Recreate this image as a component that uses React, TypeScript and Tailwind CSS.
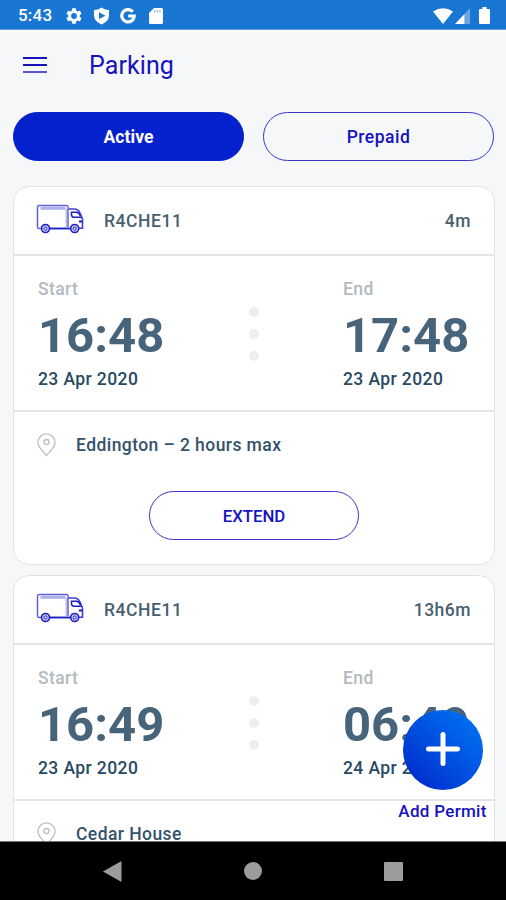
import { useState } from "react";

const permits = [
    { id: 1, plate: "R4CHE11", left: "4m", start: "16:48", startDate: "23 Apr 2020", end: "17:48", endDate: "23 Apr 2020", location: "Eddington – 2 hours max" },
    { id: 2, plate: "R4CHE11", left: "13h6m", start: "16:49", startDate: "23 Apr 2020", end: "06:49", endDate: "24 Apr 2020", location: "Cedar House" },
];

const Truck = () => (
    <svg className="-mt-[4px]" width="48" height="30" viewBox="0 0 48 30" fill="none" stroke="#1d1fc4">
        <path d="M5 24.500H3Q1.500 24.500 1.500 22.500V3Q1.500 1.500 3 1.500H30.500Q32 1.500 32 3V23" strokeWidth="1.500" opacity=".7" />
        <path d="M4.500 4.300H29.500" strokeWidth="3" opacity=".35" />
        <path d="M30.300 5V23" strokeWidth="1.500" opacity=".3" />
        <path d="M13 24.500H35" strokeWidth="1.900" />
        <path d="M32.500 5H39Q42.500 5.500 44 9L46.500 15V24.300H43" strokeWidth="1.600" opacity=".85" />
        <path d="M45.500 13.200H38Q35.500 13 35.500 10.500V8.300H40.500Q43 8.500 44.500 12" strokeWidth="1.500" />
        <path d="M43 17.500H46.500" strokeWidth="2" />
        <circle cx="9.500" cy="24.500" r="4" strokeWidth="1.600" fill="#d5d5f3" />
        <circle cx="9.500" cy="24.500" r="1.600" strokeWidth="1.200" opacity=".7" />
        <circle cx="38.700" cy="24.500" r="4" strokeWidth="1.600" fill="#d5d5f3" />
        <circle cx="38.700" cy="24.500" r="1.600" strokeWidth="1.200" opacity=".7" />
    </svg>
);

const Pin = () => (
    <svg width="20" height="24" viewBox="0 0 20 24" fill="none" stroke="#b9bfc3" strokeWidth="1.300">
        <path d="M10.500 22.600C8 19 1.900 14.500 1.900 9.500A8.600 8.600 0 0 1 19.100 9.500C19.100 14.500 13 19 10.500 22.600Z" />
        <circle cx="10.500" cy="9" r="2.500" />
    </svg>
);

const StatusBar = () => (
    <div className="flex h-[30px] shrink-0 items-center border-b border-[#5c9ade] bg-[#1976d2] pl-[18px] pr-[16px] pt-[2px] text-white">
        <span className="w-[48px] pt-px text-[17px] font-medium tracking-[0.2px]">5:43</span>
        <svg width="16" height="16" viewBox="2 2 20 20" fill="#fff">
            <path d="M19.140 12.940c.04-.3.060-.61.060-.94 0-.32-.02-.64-.07-.94l2.030-1.580c.18-.14.230-.41.120-.61l-1.920-3.320c-.12-.22-.37-.29-.59-.22l-2.390.960c-.5-.38-1.030-.7-1.620-.94l-.36-2.540c-.04-.24-.24-.41-.48-.41h-3.840c-.24 0-.43.170-.47.410l-.36 2.540c-.59.240-1.130.570-1.620.940l-2.390-.96c-.22-.08-.47 0-.59.220L2.740 8.870c-.12.210-.08.470.120.610l2.030 1.580c-.05.300-.09.630-.09.940s.02.640.070.940l-2.030 1.580c-.18.140-.23.410-.12.610l1.920 3.320c.12.220.370.290.590.220l2.390-.96c.5.380 1.030.7 1.620.940l.36 2.540c.05.240.240.410.480.410h3.840c.24 0 .44-.17.470-.41l.36-2.540c.59-.24 1.130-.56 1.620-.94l2.390.960c.22.080.470 0 .59-.22l1.920-3.320c.12-.22.070-.47-.12-.61l-2.010-1.580zM12 15.600A3.600 3.600 0 1 1 12 8.400a3.600 3.600 0 0 1 0 7.200z" />
        </svg>
        <svg className="ml-[11px]" width="17" height="18" viewBox="0 0 17 18">
            <path d="M8.500 .500Q12 3 16 3V9Q15.500 14.500 8.500 17.500Q1.500 14.500 1 9V3Q5 3 8.500 .500Z" fill="#fff" />
            <path d="M6 5.300L12.500 8.700L6 12.100Z" fill="#1976d2" />
        </svg>
        <svg className="ml-[10px]" width="16" height="16" viewBox="0 0 16 16" fill="none" stroke="#fff" strokeWidth="3.200">
            <path d="M12.800 3.800A6.200 6.200 0 1 0 14.200 8H8.200" />
        </svg>
        <svg className="ml-[13px]" width="14" height="16" viewBox="0 0 14 16">
            <path d="M5 0H12.500Q14 0 14 1.500V14.500Q14 16 12.500 16H1.500Q0 16 0 14.500V5Z" fill="#fff" />
            <path d="M5.500 2V4.500M8.200 2V4.500M10.900 2V4.500" stroke="#1976d2" strokeWidth="1.200" opacity=".5" />
        </svg>
        <svg className="ml-auto" width="20" height="16" viewBox="0 0 20 16">
            <path d="M0 3.500Q10 -3 20 3.500L10 16Z" fill="#fff" />
        </svg>
        <svg className="ml-[2px]" width="16" height="16" viewBox="0 0 16 16">
            <path d="M0 16L9.500 6V16Z" fill="#fff" />
            <path d="M9.500 6L15 0V16H9.500Z" fill="#fff" opacity=".35" />
        </svg>
        <svg className="ml-[8px]" width="11" height="17" viewBox="0 0 10 17" preserveAspectRatio="none">
            <path d="M3 0H7V2H9Q10 2 10 3V16Q10 17 9 17H1Q0 17 0 16V3Q0 2 1 2H3Z" fill="#fff" />
        </svg>
    </div>
);

const TimeBlock = ({ label, time, date }: any) => (
    <div className="w-[127px]">
        <p className="text-[17.500px] leading-[22px] font-medium tracking-[0.4px] text-[#b3babf]">{label}</p>
        <p className="mt-[8px] text-[49px] leading-[56px] font-bold text-[#48647a]">{time}</p>
        <p className="mt-[4px] whitespace-nowrap text-[17.500px] leading-[22px] font-medium tracking-[0.400px] text-[#284a62]">{date}</p>
    </div>
);

const PermitCard = ({ permit }: any) => (
    <div className="h-[379px] shrink-0 rounded-[16px] border-[1.500px] border-[#e1e4e6] bg-white">
        <div className="flex h-[67px] items-center pl-[22px] pr-[23px] text-[17.500px] font-medium text-[#48606f]">
            <Truck />
            <span className="ml-[20px] pt-px tracking-[0.550px]">{permit.plate}</span>
            <span className="ml-auto pt-px tracking-[0.500px]">{permit.left}</span>
        </div>
        <div className="flex h-[158px] justify-between border-y-[2px] border-[#e1e5e7] pl-[24px] pr-[24px] pt-[22px]">
            <TimeBlock label="Start" time={permit.start} date={permit.startDate} />
            <div className="mt-[29px] flex flex-col gap-[12px]">
                <span className="size-[10px] rounded-full bg-[#eceff0]" />
                <span className="size-[10px] rounded-full bg-[#eceff0]" />
                <span className="size-[10px] rounded-full bg-[#eceff0]" />
            </div>
            <TimeBlock label="End" time={permit.end} date={permit.endDate} />
        </div>
        <div className="flex h-[66px] items-center pl-[22px]">
            <Pin />
            <span className="ml-[20px] text-[17.500px] font-medium tracking-[0.430px] text-[#34536a]">{permit.location}</span>
        </div>
        <div className="flex justify-center pt-[13px]">
            <button className="h-[49px] w-[210px] rounded-full border border-[#3b35c8] pt-[2px] text-[16.800px] font-medium text-[#1612bd]">EXTEND</button>
        </div>
    </div>
);

const App = () => {

    const [tab, setTab] = useState("active");

    const tabClass = (name: string) =>
        tab === name
            ? "h-[49px] flex-1 rounded-full border border-[#0520cd] bg-[#0520cd] pt-[2px] text-[17.500px] font-bold tracking-[0.1px] text-white"
            : "h-[49px] flex-1 rounded-full border border-[#3b35c8] pt-[2px] text-[17.500px] font-medium tracking-[0.500px] text-[#1612bd]";

    return (
        <div className="relative flex h-[900px] w-[506px] flex-col overflow-hidden bg-[#f5f7f9] font-['Roboto',sans-serif]">
            <StatusBar />
            <div className="flex h-[82px] shrink-0 items-center border-t-2 border-white pb-[13px] pl-[23px]">
                <button className="flex flex-col gap-[5px] pb-[2px]">
                    <span className="h-[2px] w-[24px] bg-[#1612bd]" />
                    <span className="h-[2px] w-[24px] bg-[#1612bd]" />
                    <span className="h-[2px] w-[24px] bg-[#5c55cc]" />
                </button>
                <h1 className="ml-[42px] text-[25px] tracking-[0.1px] text-[#1612bd]">Parking</h1>
            </div>
            <div className="flex shrink-0 gap-[19px] pl-[13px] pr-[12px]">
                <button className={tabClass("active")} onClick={() => setTab("active")}>Active</button>
                <button className={tabClass("prepaid")} onClick={() => setTab("prepaid")}>Prepaid</button>
            </div>
            <div className="flex min-h-0 flex-1 flex-col gap-[10px] overflow-hidden pl-[13px] pr-[11px] pt-[25px]">
                {permits.map((permit) => (
                    <PermitCard key={permit.id} permit={permit} />
                ))}
            </div>
            <div className="flex h-[59px] shrink-0 items-center justify-between border-t border-[#777] bg-black px-[103px] text-[#9c9c9c]">
                <svg width="19" height="21" viewBox="0 0 19 21" fill="currentColor"><path d="M0 10.500L18.500 0V21Z" /></svg>
                <span className="size-[18px] rounded-full bg-[#9c9c9c]" />
                <span className="size-[19px] rounded-[1px] bg-[#9c9c9c]" />
            </div>
            <div className="absolute right-[19px] top-[710px] flex w-[89px] flex-col items-center">
                <button className="flex size-[80px] items-center justify-center rounded-full bg-linear-to-tr from-[#001bc8] to-[#0478f6] pb-[2px]">
                    <svg width="34" height="34" viewBox="0 0 34 34" stroke="#fff" strokeWidth="5" strokeLinecap="round"><path d="M17 2.500V31.500M2.500 17H31.500" /></svg>
                </button>
                <span className="mt-[10px] whitespace-nowrap text-[17px] leading-[22px] font-medium tracking-[0.300px] text-[#1612bd]">Add Permit</span>
            </div>
        </div>
    );
};

export default App;
